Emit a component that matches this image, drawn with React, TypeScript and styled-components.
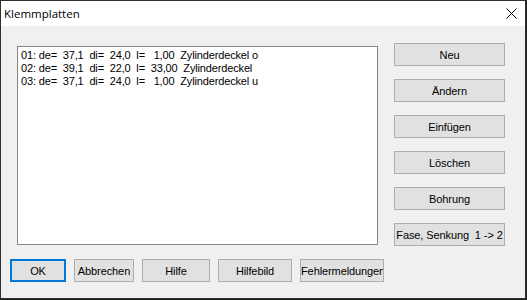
import styled, { createGlobalStyle } from 'styled-components';

const GlobalStyle = createGlobalStyle`
  html, body {
    margin: 0;
    padding: 0;
    background: #1b2418;
  }
`;

const rows = [
  '01: de=  37,1  di=  24,0  l=   1,00  Zylinderdeckel o',
  '02: de=  39,1  di=  22,0  l=  33,00  Zylinderdeckel',
  '03: de=  37,1  di=  24,0  l=   1,00  Zylinderdeckel u',
];

const sideButtons = ['Neu', 'Ändern', 'Einfügen', 'Löschen', 'Bohrung', 'Fase, Senkung  1 -> 2'];

const footerButtons = [
  { label: 'OK', width: 56, primary: true },
  { label: 'Abbrechen', width: 60 },
  { label: 'Hilfe', width: 68 },
  { label: 'Hilfebild', width: 74 },
  { label: 'Fehlermeldungen', width: 84 },
];

const Window = styled.div`
  width: 524px;
  height: 297px;
  border: 1px solid #2e2e2e;
  background: #f0f0f0;
  display: flex;
  flex-direction: column;
  font-family: 'Liberation Sans', Arial, sans-serif;
`;

const TitleBar = styled.div`
  height: 25px;
  background: #ffffff;
  display: flex;
  align-items: center;
  justify-content: space-between;
  padding-left: 3px;
  font-family: 'Open Sans', 'Noto Sans', sans-serif;
  font-size: 11.5px;
  color: #000;
`;

const CloseBox = styled.div`
  width: 28px;
  height: 25px;
  display: flex;
  align-items: center;
  justify-content: center;
`;

const Main = styled.div`
  display: flex;
  padding: 17px 0 0 16px;
  gap: 16px;
`;

const ListBox = styled.div`
  margin-top: 3px;
  border: 1px solid #828790;
  background: #ffffff;
  padding: 2px 3px;
  box-sizing: content-box;
  width: 353px;
  height: 193px;
`;

const ListRow = styled.div`
  font-size: 11px;
  line-height: 13px;
  letter-spacing: -0.15px;
  white-space: pre;
  color: #000;
`;

const SideColumn = styled.div`
  display: flex;
  flex-direction: column;
  gap: 13px;
`;

const Button = styled.div<{ $width: number; $primary?: boolean }>`
  box-sizing: border-box;
  width: ${(p) => p.$width}px;
  height: 23px;
  background: #e1e1e1;
  border: ${(p) => (p.$primary ? '2px solid #0078d7' : '1px solid #adadad')};
  display: flex;
  align-items: center;
  justify-content: safe center;
  overflow: hidden;
  white-space: pre;
  font-size: 11px;
  letter-spacing: -0.1px;
  color: #000;
`;

const Footer = styled.div`
  display: flex;
  gap: 8px;
  margin-top: 13px;
  padding-left: 9px;
`;

export default function App() {
  return (
    <>
      <GlobalStyle />
      <Window>
        <TitleBar>
          <span>Klemmplatten</span>
          <CloseBox>
            <svg width="11" height="11" viewBox="0 0 11 11">
              <path d="M0.5 0.5 L10.5 10.5 M10.5 0.5 L0.5 10.5" stroke="#000" strokeWidth="1" />
            </svg>
          </CloseBox>
        </TitleBar>
        <Main>
          <ListBox>
            {rows.map((r) => (
              <ListRow key={r}>{r}</ListRow>
            ))}
          </ListBox>
          <SideColumn>
            {sideButtons.map((b) => (
              <Button key={b} $width={111}>
                {b}
              </Button>
            ))}
          </SideColumn>
        </Main>
        <Footer>
          {footerButtons.map((b) => (
            <Button key={b.label} $width={b.width} $primary={b.primary}>
              {b.label}
            </Button>
          ))}
        </Footer>
      </Window>
    </>
  );
}
